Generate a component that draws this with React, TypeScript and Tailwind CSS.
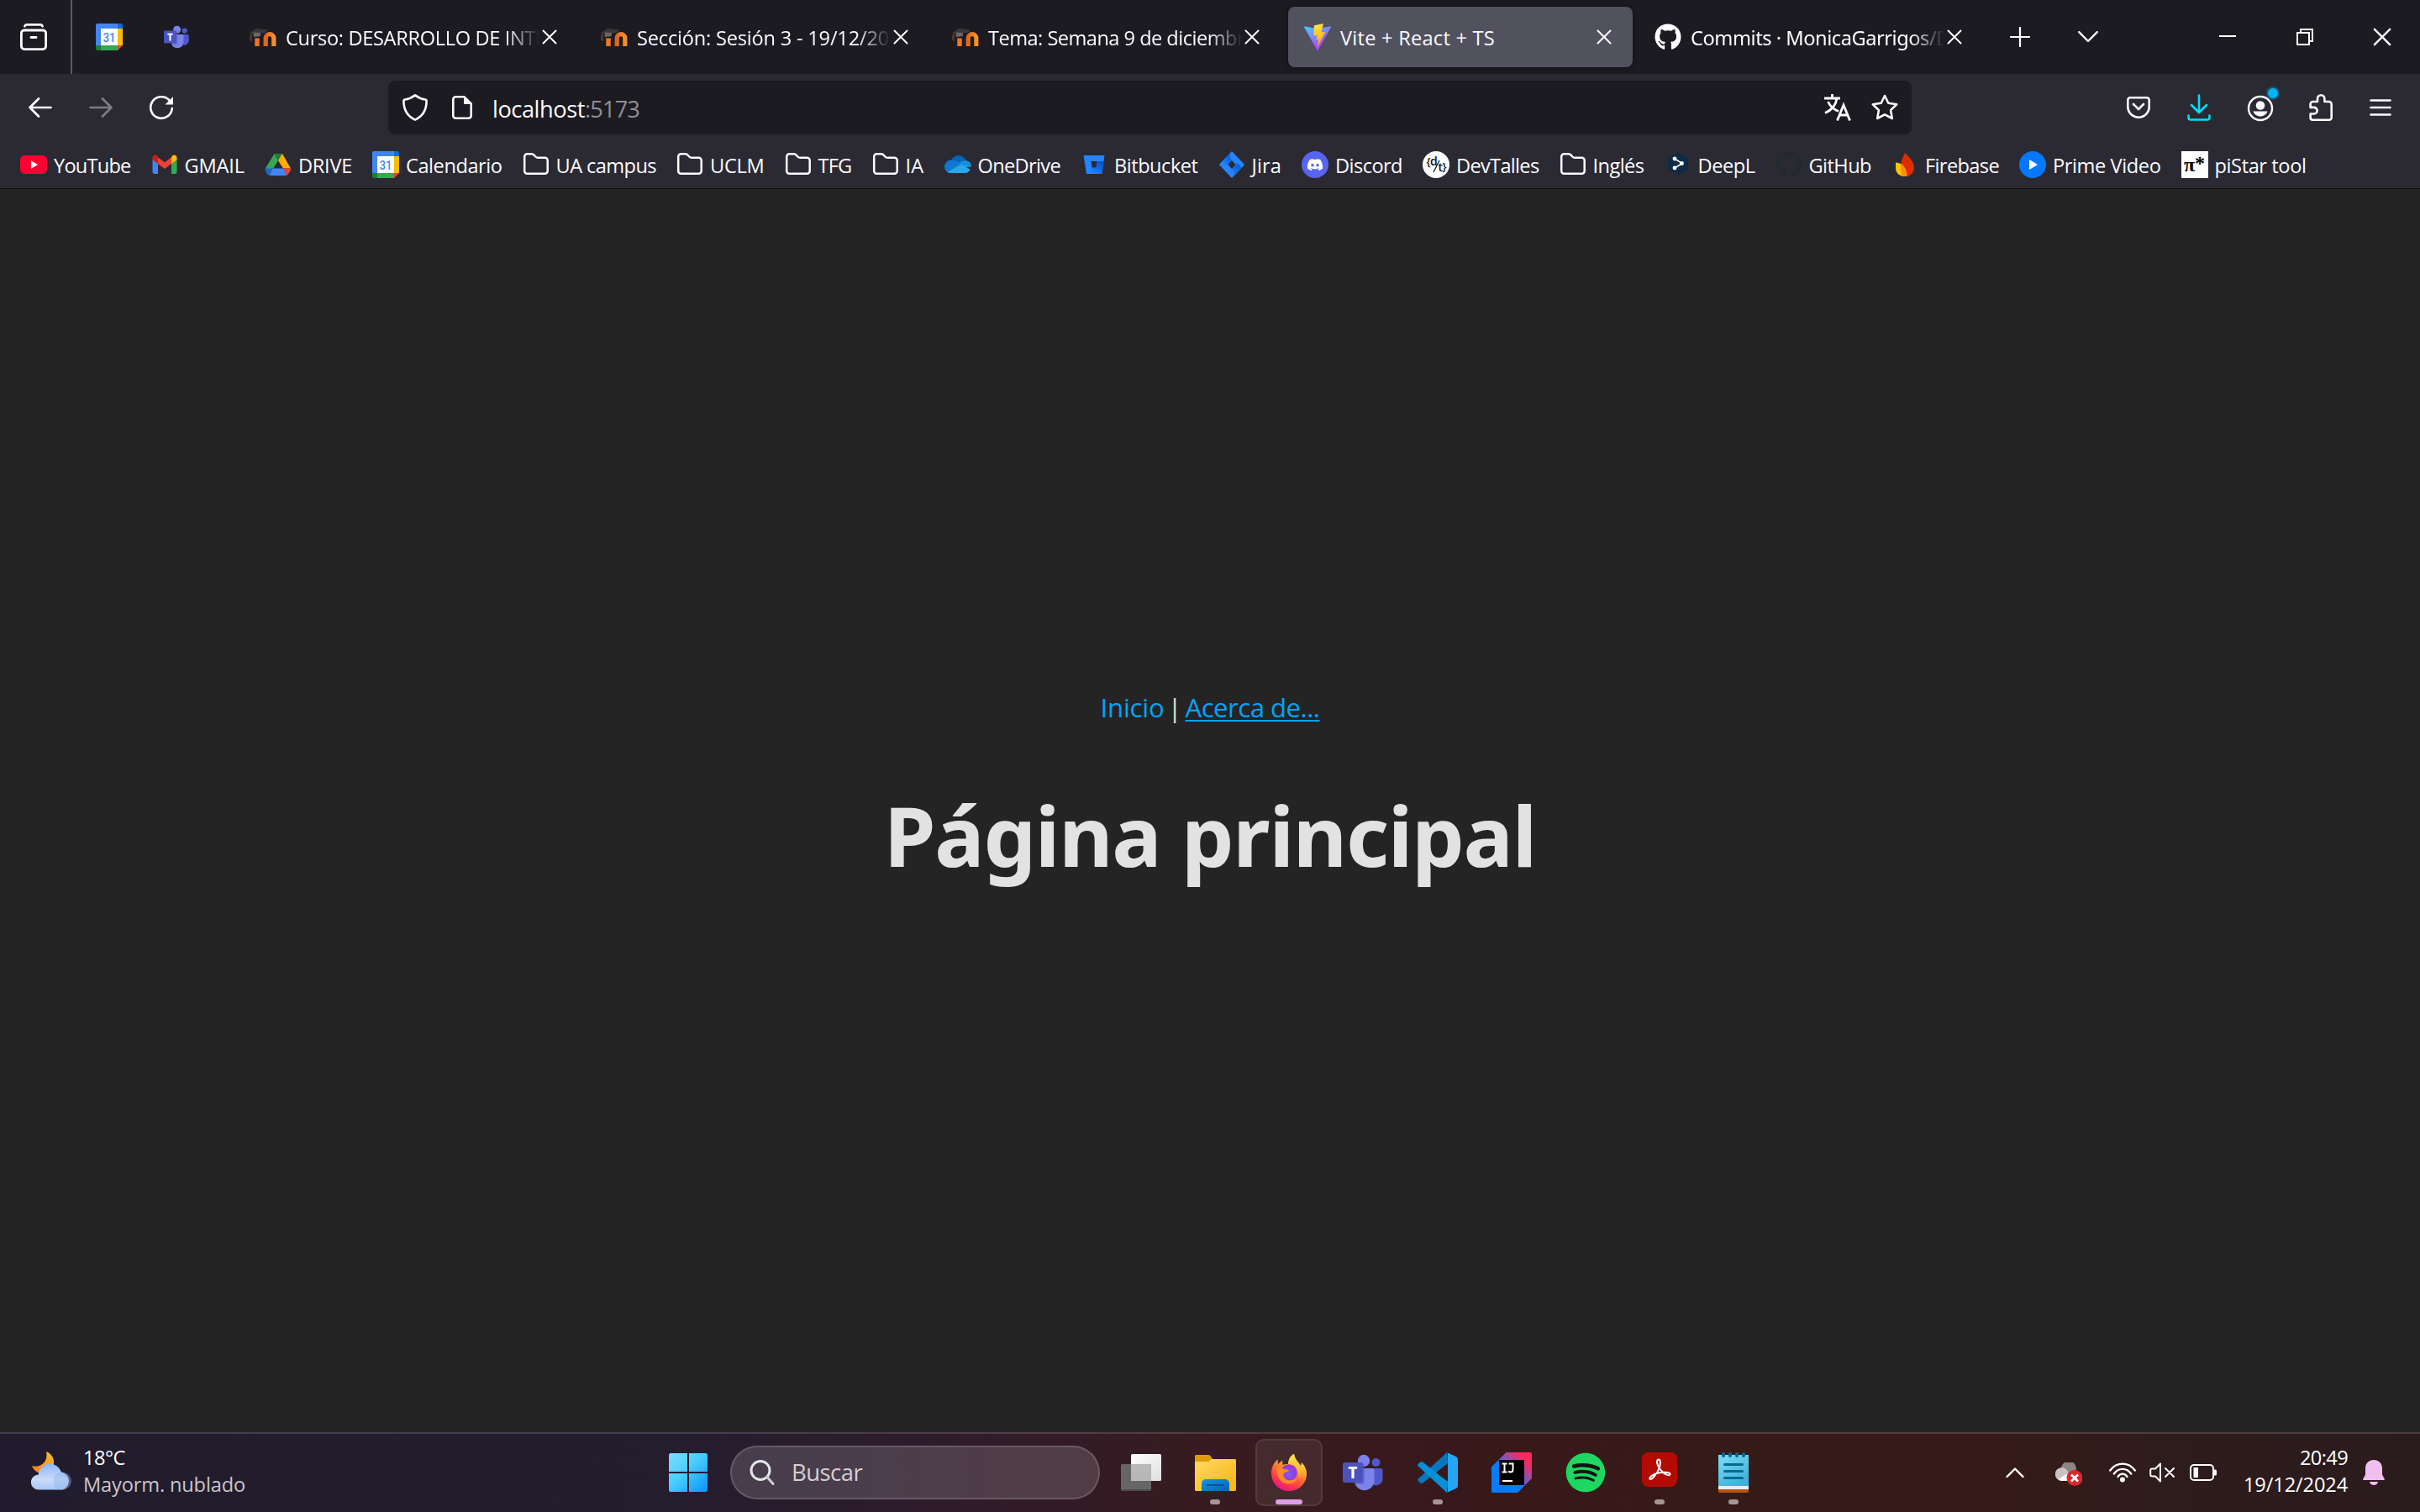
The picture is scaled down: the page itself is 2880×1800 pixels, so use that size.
import { useLayoutEffect, useRef, useState, type ReactNode } from "react";
import { FaGithub, FaDiscord, FaSpotify } from "react-icons/fa";

/* Text set to an exact advance width by adjusting its tracking. */
function Fit({ w, children, className = "" }: { w: number; children: string; className?: string }) {
  const ref = useRef<HTMLSpanElement>(null);
  const [spacing, setSpacing] = useState(0);
  useLayoutEffect(() => {
    if (ref.current) {
      setSpacing((w - ref.current.getBoundingClientRect().width) / children.length);
    }
  }, []);
  return (
    <span ref={ref} className={`inline-block shrink-0 whitespace-pre ${className}`} style={{ letterSpacing: spacing }}>
      {children}
    </span>
  );
}

/* ---------- favicons ---------- */

const Calendar = () => (
  <svg viewBox="0 0 32 32" className="size-8 shrink-0">
    <path d="M0 2a2 2 0 0 1 2-2h24v6H0z" fill="#4285f4" />
    <path d="M0 2h6v24H0z" fill="#4285f4" />
    <path d="M26 0h4a2 2 0 0 1 2 2v4h-6z" fill="#1967d2" />
    <path d="M26 6h6v20h-6z" fill="#fbbc04" />
    <path d="M6 26h20v6H6z" fill="#34a853" />
    <path d="M0 26h6v6H2a2 2 0 0 1-2-2z" fill="#188038" />
    <path d="M26 26h6l-6 6z" fill="#ea4335" />
    <path d="M6 6h20v20H6z" fill="#fff" />
    <text x="16" y="21.6" textAnchor="middle" fontFamily="Roboto, sans-serif" fontSize="15.5" fontWeight="500" fill="#4285f4" textLength="15" lengthAdjust="spacingAndGlyphs">31</text>
  </svg>
);

const Teams = ({ className }: { className: string }) => (
  <svg viewBox="0 0 48 44" className={className}>
    <circle cx="39.5" cy="10" r="5" fill="#5059c9" />
    <path d="M35 17h10a2.5 2.5 0 0 1 2.500 2.500V29a8 8 0 0 1-12.500 7z" fill="#5059c9" />
    <circle cx="25" cy="8" r="7.200" fill="#7b83eb" />
    <path d="M14 17h21.500a2 2 0 0 1 2 2v12.500a11.700 11.700 0 0 1-23.500 0z" fill="#7b83eb" />
    <path d="M16 12h10v21a3 3 0 0 1-3 3h-8z" fill="#4a4fb0" opacity=".45" />
    <rect x="0" y="10" width="24" height="24" rx="2" fill="#4b53bc" />
    <path d="M6.800 15h10.400v2.800h-3.600V29h-3.200V17.800H6.800z" fill="#fff" />
  </svg>
);

const Moodle = () => (
  <svg viewBox="0 0 32 32" className="size-8 shrink-0">
    <defs>
      <linearGradient id="moo" x1="0" x2="1">
        <stop offset="0" stopColor="#e0651f" />
        <stop offset="1" stopColor="#f79029" />
      </linearGradient>
    </defs>
    <path d="M0 17c0-3 1-5 3-5.500V21c-2 0-3-1-3-4z" fill="#5a3426" />
    <path d="M0 11 8 6l14 1.500-4 4-7-.5-5 3-1 4-1-5z" fill="#3a3739" />
    <path d="M9 27V17.500" stroke="#ee7623" strokeWidth="5.500" fill="none" />
    <path d="M19.200 27V17.500a4.800 4.800 0 0 1 9.600 0V27" stroke="url(#moo)" strokeWidth="5.200" fill="none" />
    <path d="M5 10.500 13 11v4l-8 1z" fill="#6a6667" />
  </svg>
);

const Vite = () => (
  <svg viewBox="0 0 32 32" className="size-8 shrink-0">
    <defs>
      <linearGradient id="va" x1="0" y1="0" x2=".6" y2="1">
        <stop offset="0" stopColor="#41d1ff" />
        <stop offset="1" stopColor="#bd34fe" />
      </linearGradient>
      <linearGradient id="vb" x1=".4" y1="0" x2=".6" y2="1">
        <stop offset="0" stopColor="#ffea5a" />
        <stop offset=".3" stopColor="#ffd029" />
        <stop offset="1" stopColor="#ffa800" />
      </linearGradient>
    </defs>
    <path d="M31.800 4.600 16.700 31.500a.8.8 0 0 1-1.400 0L.2 4.600a.8.8 0 0 1 .9-1.200L16 6l14.900-2.600a.8.8 0 0 1 .9 1.200z" fill="url(#va)" />
    <path d="m23.500 0-11.200 2.200a.4.4 0 0 0-.3.400l-.7 11.600c0 .3.200.5.500.4l3.100-.7c.3 0 .5.200.5.500l-.9 4.500c0 .3.200.6.500.5l1.900-.6c.3-.1.600.2.500.5l-1.500 7c-.1.500.5.700.8.300l.2-.3 8-15.900c.1-.3-.1-.6-.5-.5l-3.200.6c-.3.100-.5-.2-.5-.5l2.100-9.500z" fill="url(#vb)" />
  </svg>
);

const Folder = () => (
  <svg viewBox="0 0 32 32" className="size-8 shrink-0" fill="none" stroke="#fbfbfe" strokeWidth="2.500" strokeLinejoin="round">
    <path d="M2.200 23.500V6.500A3.200 3.200 0 0 1 5.400 3.300h5.200a4 4 0 0 1 3 1.300l1.700 1.900a4 4 0 0 0 3 1.300h8.200a3.200 3.200 0 0 1 3.200 3.200v12.500a3.200 3.200 0 0 1-3.200 3.200H5.400a3.200 3.200 0 0 1-3.200-3.200z" />
  </svg>
);

const YouTube = () => (
  <svg viewBox="0 0 32 32" className="size-8 shrink-0">
    <rect y="5" width="32" height="22" rx="5.500" fill="#ff0033" />
    <path d="M13 11.300v9.400l8-4.700z" fill="#fff" />
  </svg>
);

const Gmail = () => (
  <svg viewBox="0 0 32 32" className="size-8 shrink-0">
    <path d="M1.500 10v14.800c0 1.200 1 2.200 2.200 2.200H8V14z" fill="#4285f4" />
    <path d="M24 14v13h4.300c1.200 0 2.200-1 2.200-2.200V10z" fill="#34a853" />
    <path d="M24 7.200V15l6.500-4.800V7.600c0-2.600-3-4.200-5.200-2.500z" fill="#fbbc04" />
    <path d="M8 15V7.200l8 6 8-6V15l-8 6z" fill="#ea4335" />
    <path d="M1.500 7.600v2.600L8 15V7.200L6.700 5.100C4.500 3.500 1.500 5 1.500 7.600z" fill="#c5221f" />
  </svg>
);

const Drive = () => (
  <svg viewBox="0 0 32 32" className="size-8 shrink-0">
    <path d="M11.500 3 16 11 8.500 23.500 4 28.500l-3-5.500c-.5-1-.4-2 0-2.800z" fill="#34a853" />
    <path d="M11.500 3c1-.4 8-.4 9 0L16 11z" fill="#188038" />
    <path d="M20.500 3c.6.3 1 .7 1.300 1.200L31 20.500H22L16 11z" fill="#ffab00" />
    <path d="M1 20.500h9l-4.500 8.200c-.7-.3-1.200-.7-1.500-1.200L1.200 23a3 3 0 0 1-.2-2.500z" fill="#1967d2" />
    <path d="M10 20.500h12l4.500 8.200c-.5.300-20 .3-21 0z" fill="#4285f4" />
    <path d="M22 20.500h9c.3 1 .2 1.800-.3 2.600L28 27.500c-.4.600-.9 1-1.500 1.200z" fill="#ea4335" />
  </svg>
);

const OneDrive = () => (
  <svg viewBox="0 0 32 32" className="size-8 shrink-0">
    <path d="M7 14C8 8.500 12 5 16.500 5c4 0 7.500 2.300 9 6L18 18z" fill="#0364b8" />
    <path d="M25 11c4 .2 7 3.300 7 7.500L17 20l-3-6z" fill="#1490df" />
    <path d="M8 10.500c3-.3 5 .5 7 1.700l5 3L3 24.800A8 8 0 0 1 0 18.500c0-4.300 3.500-7.800 8-8z" fill="#0f78d4" />
    <path d="M3 24.800 20 15.200l10.500 6.500c-.8 2.500-3 4.300-5.700 4.300H8a8 8 0 0 1-5-1.200z" fill="#28a8ea" />
  </svg>
);

const Bitbucket = () => (
  <svg viewBox="0 0 32 32" className="size-8 shrink-0">
    <defs>
      <linearGradient id="bb" x1="1" y1=".2" x2=".3" y2=".9">
        <stop offset="0" stopColor="#0052cc" />
        <stop offset="1" stopColor="#2684ff" />
      </linearGradient>
    </defs>
    <path d="M3.500 5h25l-3.200 22H7z" fill="#2684ff" />
    <path d="M19.500 12h8L25.300 27H7l6-7.500h5.500z" fill="url(#bb)" />
    <path d="M12.500 12h7l-1 7.500h-5z" fill="#2b2a33" />
  </svg>
);

const Jira = () => (
  <svg viewBox="0 0 32 32" className="size-8 shrink-0">
    <defs>
      <linearGradient id="ja" x1="1" y1="0" x2="0" y2="1">
        <stop offset="0" stopColor="#0052cc" />
        <stop offset="1" stopColor="#2684ff" />
      </linearGradient>
    </defs>
    <path d="M16 0 .8 16 16 32l15.200-16z" fill="#2684ff" />
    <path d="M16 0c-3 4-3 8 0 11l-7 7-4-5.500z" fill="url(#ja)" />
    <path d="M16 32c3-4 3-8 0-11l7-7 4 5.500z" fill="url(#ja)" />
    <path d="m16 11-4.500 5 4.500 5 4.500-5z" fill="#2b2a33" />
  </svg>
);

const Discord = () => (
  <span className="grid size-8 shrink-0 place-items-center rounded-full bg-[#5865f2]">
    <FaDiscord className="size-5 text-white" />
  </span>
);

const DevTalles = () => (
  <svg viewBox="0 0 32 32" className="size-8 shrink-0">
    <circle cx="16" cy="16" r="16" fill="#fff" />
    <g fill="#111" fontFamily="Open Sans, sans-serif" fontWeight="600">
      <text x="4.500" y="17" fontSize="13">{"{"}</text>
      <text x="9" y="16.500" fontSize="14">d</text>
      <text x="18.500" y="24" fontSize="14">t</text>
      <text x="23.500" y="23" fontSize="13">{"}"}</text>
    </g>
    <path d="m20 11-7 14" stroke="#111" strokeWidth="1.300" />
  </svg>
);

const DeepL = () => (
  <svg viewBox="0 0 32 32" className="size-8 shrink-0">
    <path d="m16 1 12 7v14l-9 5-2.500 3.500V28L4 21.500V8z" fill="#0f2b46" />
    <path d="m12 9 9 5.500-9 5.500" stroke="#fff" strokeWidth="1.500" fill="none" />
    <circle cx="12" cy="9" r="2.400" fill="#fff" />
    <circle cx="20.500" cy="14.500" r="2.400" fill="#fff" />
    <circle cx="12" cy="20" r="2.400" fill="#fff" />
  </svg>
);

const Firebase = () => (
  <svg viewBox="0 0 32 32" className="size-8 shrink-0">
    <path d="M16 2c6 6 11 11 11 17.500A10 10 0 0 1 18 30c-4-1-7-5-7-10.500C11 13 13 8 16 2z" fill="#dd2c00" />
    <path d="M5 13.500c6 0 10.500 3.500 11.500 16.500C10 30.500 5 26 5 20z" fill="#ffc400" />
    <path d="M11 14.500c4.500 3 7.500 8 7.500 15.300-2 .5-4 .2-5.500-.4-2-3.500-3-9-2-14.900z" fill="#ff9100" />
  </svg>
);

const Prime = () => (
  <svg viewBox="0 0 32 32" className="size-8 shrink-0">
    <circle cx="16" cy="16" r="16" fill="#0578ff" />
    <path d="M12 10v12l10-6z" fill="#fff" />
  </svg>
);

const PiStar = () => (
  <span className="flex size-8 shrink-0 items-center justify-center bg-white text-2xl leading-8 font-bold text-black [font-family:'Liberation_Serif',serif]">
    π<span className="-mt-1">*</span>
  </span>
);

const GithubDark = () => <FaGithub className="size-8 shrink-0 text-[#24292e]" />;

/* ---------- tab strip ---------- */

const Cross = ({ className }: { className: string }) => (
  <svg viewBox="0 0 18 18" className={className} stroke="#fbfbfe" strokeWidth="2" strokeLinecap="round">
    <path d="m1.500 1.500 15 15M16.500 1.500l-15 15" />
  </svg>
);

function Tab({ icon, title, w, active, fade, className = "" }: { icon: ReactNode; title: string; w: number; active?: boolean; fade?: boolean; className?: string }) {
  return (
    <div className="w-[418px] shrink-0 px-1 py-2">
      <div className={`flex h-[72px] items-center rounded-lg ${fade ? "pl-[18px]" : "pl-[19px]"} ${active ? "bg-[#52525e] shadow-[0_0_6px_rgba(0,0,0,0.5)]" : ""}`}>
        {icon}
        <div className={`ml-[11px] w-[302px] pt-px ${fade ? "[mask-image:linear-gradient(to_left,transparent,black_40px)]" : ""}`}>
          <Fit w={w} className={className}>{title}</Fit>
        </div>
        <Cross className="ml-[3px] size-[18px] shrink-0" />
      </div>
    </div>
  );
}

function TabStrip() {
  return (
    <div className="flex h-[88px] items-center bg-[#1c1b22]">
      <div className="flex h-full w-[86px] items-center border-r-2 border-[#5b5a62] pl-6">
        <svg viewBox="0 0 32 32" className="size-8" fill="none" stroke="#fbfbfe" strokeWidth="2.800" strokeLinecap="round">
          <path d="M5.500 3.200A2.500 2.500 0 0 1 8 1.400h16a2.500 2.500 0 0 1 2.500 1.800" />
          <rect x="1.400" y="8" width="29.200" height="22.600" rx="3.500" />
          <path d="M13 16.500h6" />
        </svg>
      </div>
      <div className="ml-7"><Calendar /></div>
      <Teams className="ml-[49px] h-[28px] w-[30px]" />
      <div className="ml-[50px] flex">
        <Tab icon={<Moodle />} title="Curso: DESARROLLO DE INTE" w={310} fade />
        <Tab icon={<Moodle />} title="Sección: Sesión 3 - 19/12/20" w={300} fade />
        <Tab icon={<Moodle />} title="Tema: Semana 9 de diciembr" w={305} fade />
        <Tab icon={<Vite />} title="Vite + React + TS" w={184} active />
        <Tab icon={<FaGithub className="size-8 shrink-0 text-white" />} title="Commits · MonicaGarrigos/D" w={309} fade className="[font-family:'Noto_Sans',sans-serif]" />
      </div>
      <svg viewBox="0 0 24 24" className="ml-[27px] size-6" stroke="#fbfbfe" strokeWidth="2.200" strokeLinecap="round">
        <path d="M12 1v22M1 12h22" />
      </svg>
      <svg viewBox="0 0 24 14" className="ml-[57px] h-[14px] w-6" fill="none" stroke="#fbfbfe" strokeWidth="2.400" strokeLinecap="round" strokeLinejoin="round">
        <path d="M1.200 1.200 12 12 22.800 1.200" />
      </svg>
      <div className="ml-[144px] h-0.5 w-5 -translate-y-px bg-white" />
      <svg viewBox="0 0 20 20" className="ml-[72px] size-5" fill="none" stroke="#fff" strokeWidth="2">
        <path d="M1 5h14v14H1zM5 5V1h14v14h-4" />
      </svg>
      <Cross className="ml-[71px] size-[22px]" />
    </div>
  );
}

/* ---------- navigation bar ---------- */

function NavBar() {
  return (
    <div className="flex h-20 items-center">
      <svg viewBox="0 0 28 24" className="ml-[34px] h-6 w-7" fill="none" stroke="#fbfbfe" strokeWidth="2.700" strokeLinecap="round" strokeLinejoin="round">
        <path d="M26.500 12H1.500M12 1.500 1.500 12 12 22.500" />
      </svg>
      <svg viewBox="0 0 28 24" className="ml-11 h-6 w-7" fill="none" stroke="#7d7c83" strokeWidth="2.700" strokeLinecap="round" strokeLinejoin="round">
        <path d="M1.500 12h25M16 1.500 26.500 12 16 22.500" />
      </svg>
      <svg viewBox="0 0 29 29" className="ml-11 size-[29px]" fill="none" stroke="#fbfbfe" strokeWidth="2.700" strokeLinecap="round">
        <path d="M23.500 5.400A12.800 12.800 0 1 0 26.800 15" />
        <path d="M28 1v9.500H18.500z" fill="#fbfbfe" stroke="none" />
      </svg>
      <div className="ml-[255px] flex h-16 w-[1813px] items-center rounded-lg bg-[#1c1b22]">
        <svg viewBox="0 0 30 32" className="ml-[17px] h-8 w-[30px]" fill="none" stroke="#fbfbfe" strokeWidth="2.600" strokeLinejoin="round">
          <path d="M15 1.400C18.500 4 23 6 27 6.500c.9.100 1.600.8 1.600 1.800C28.600 19 24 26.500 15 30.600 6 26.500 1.400 19 1.400 8.300c0-1 .7-1.700 1.600-1.800C7 6 11.500 4 15 1.400z" />
        </svg>
        <svg viewBox="0 0 24 28" className="ml-[29px] h-7 w-6" fill="none" stroke="#fbfbfe" strokeWidth="2.600" strokeLinejoin="round">
          <path d="M14.500 1.300H4.300a3 3 0 0 0-3 3v19.400a3 3 0 0 0 3 3h15.400a3 3 0 0 0 3-3V9.500z" />
          <path d="M14 1v9h9z" fill="#fbfbfe" stroke="none" />
        </svg>
        <div className="ml-6 pt-[3px] text-[27.200px] leading-10">
          <Fit w={110}>localhost</Fit>
          <Fit w={65} className="text-[#8f8e94]">:5173</Fit>
        </div>
        <svg viewBox="0 0 32 32" className="ml-auto size-8" fill="none" stroke="#fbfbfe" strokeWidth="2.800">
          <path d="M0 5h19M9.500 0v5M4.500 9C7 15 12 18.500 17 20.500M15 5C14 13 9 19 1 22.500M15.500 31.500 23 13l7.500 18.500M18 25h10" />
        </svg>
        <svg viewBox="0 0 32 32" className="mr-4 ml-6 size-8" fill="none" stroke="#fbfbfe" strokeWidth="2.600" strokeLinejoin="round">
          <path d="m16 2 4.300 8.800 9.900 1.400-7.100 6.900 1.700 9.900L16 24.400 7.200 29l1.700-9.900-7.100-6.900 9.900-1.400z" />
        </svg>
      </div>
      <svg viewBox="0 0 28 26" className="ml-64 h-[26px] w-7" fill="none" stroke="#fbfbfe" strokeWidth="2.600" strokeLinecap="round" strokeLinejoin="round">
        <path d="M4 1.300h20a2.700 2.700 0 0 1 2.700 2.700v8A12.700 12.700 0 0 1 1.300 12V4A2.700 2.700 0 0 1 4 1.300zM8 9l6 6 6-6" />
      </svg>
      <svg viewBox="0 0 28 32" className="ml-11 h-8 w-7" fill="none" stroke="#00ddff" strokeWidth="2.600" strokeLinecap="round" strokeLinejoin="round">
        <path d="M14 1.500v20M5 13l9 9 9-9M1.500 25.500V28a2.500 2.500 0 0 0 2.500 2.500h20a2.500 2.500 0 0 0 2.500-2.500v-2.500" />
      </svg>
      <div className="relative ml-[43px]">
        <svg viewBox="0 0 32 32" className="mt-0.5 size-8">
          <circle cx="16" cy="16" r="14" fill="none" stroke="#fbfbfe" strokeWidth="2.400" />
          <circle cx="16" cy="12.500" r="5.300" fill="#fbfbfe" />
          <path d="M7.500 19.500h17c-1 3.500-4.500 6-8.500 6s-7.500-2.500-8.500-6z" fill="#fbfbfe" />
        </svg>
        <span className="absolute -top-1.5 left-[25px] size-3 rounded-full bg-[#00b3f4] ring-2 ring-[#00b3f4]/30" />
      </div>
      <svg viewBox="0 0 28 32" className="ml-[42px] h-8 w-7" fill="none" stroke="#fbfbfe" strokeWidth="2.600" strokeLinejoin="round">
        <path d="M10 9V5.500a4.200 4.200 0 0 1 8.400 0V9h5.300a3 3 0 0 1 3 3v16a2.700 2.700 0 0 1-2.700 2.700H4.300a2.700 2.700 0 0 1-2.700-2.700v-4.500h4.200a3.800 3.800 0 0 0 0-7.600H1.600V12a3 3 0 0 1 3-3z" />
      </svg>
      <svg viewBox="0 0 26 20" className="ml-11 h-5 w-[26px]" stroke="#fbfbfe" strokeWidth="2.600" strokeLinecap="round">
        <path d="M1.500 1.500h23M1.500 10h23M1.500 18.500h23" />
      </svg>
    </div>
  );
}

const bookmarks: { icon: ReactNode; label: string; w: number }[] = [
  { icon: <YouTube />, label: "YouTube", w: 91.5 },
  { icon: <Gmail />, label: "GMAIL", w: 71.5 },
  { icon: <Drive />, label: "DRIVE", w: 64 },
  { icon: <Calendar />, label: "Calendario", w: 114.5 },
  { icon: <Folder />, label: "UA campus", w: 119.5 },
  { icon: <Folder />, label: "UCLM", w: 64.5 },
  { icon: <Folder />, label: "TFG", w: 40 },
  { icon: <Folder />, label: "IA", w: 22 },
  { icon: <OneDrive />, label: "OneDrive", w: 98.5 },
  { icon: <Bitbucket />, label: "Bitbucket", w: 99.5 },
  { icon: <Jira />, label: "Jira", w: 35.5 },
  { icon: <Discord />, label: "Discord", w: 80 },
  { icon: <DevTalles />, label: "DevTalles", w: 98.5 },
  { icon: <Folder />, label: "Inglés", w: 61 },
  { icon: <DeepL />, label: "DeepL", w: 68 },
  { icon: <GithubDark />, label: "GitHub", w: 74.5 },
  { icon: <Firebase />, label: "Firebase", w: 88 },
  { icon: <Prime />, label: "Prime Video", w: 128.5 },
  { icon: <PiStar />, label: "piStar tool", w: 109 },
];

function Bookmarks() {
  return (
    <div className="flex h-14 items-center gap-6 pl-6">
      {bookmarks.map((b) => (
        <div key={b.label} className="flex items-center gap-2">
          {b.icon}
          <Fit w={b.w} className="pt-0.5">{b.label}</Fit>
        </div>
      ))}
    </div>
  );
}

/* ---------- taskbar ---------- */

const Weather = () => (
  <svg viewBox="0 0 48 46" className="h-[46px] w-12">
    <defs>
      <linearGradient id="wm" x1="1" y1="0" x2="0" y2="1">
        <stop offset="0" stopColor="#f5c02f" />
        <stop offset="1" stopColor="#f07f1b" />
      </linearGradient>
      <linearGradient id="wc" x1="0" y1="0" x2="0" y2="1">
        <stop offset="0" stopColor="#8fb5f5" />
        <stop offset=".6" stopColor="#c9dcf8" />
        <stop offset="1" stopColor="#a9c6f6" />
      </linearGradient>
    </defs>
    <path d="M18 0c9 3.500 12 14 6 21-6 7-19 7-23-4 9 3 20-4 17-17z" fill="url(#wm)" />
    <path d="M9 45.500a9 9 0 0 1-.3-18A14 14 0 0 1 36 24.600 10.800 10.800 0 0 1 37.500 45.500z" fill="url(#wc)" />
    <path d="M27 31a11 11 0 0 1 21 4 10.500 10.500 0 0 1-10.500 10.500H28z" fill="#8fb2ee" opacity=".45" />
  </svg>
);

const Explorer = () => (
  <svg viewBox="0 0 49 43" className="h-[43px] w-[49px]">
    <defs>
      <linearGradient id="ex" x1="0" y1="0" x2="1" y2="1">
        <stop offset="0" stopColor="#ffd967" />
        <stop offset="1" stopColor="#f7b50c" />
      </linearGradient>
      <linearGradient id="ey" x1="0" y1="0" x2="1" y2="1">
        <stop offset="0" stopColor="#1594e0" />
        <stop offset="1" stopColor="#0663ba" />
      </linearGradient>
    </defs>
    <path d="M0 1.500C0 .6.600 0 1.500 0h14c1.500 0 2.500.5 3.500 1.700L21 5v8H0z" fill="#e09c04" />
    <path d="M0 9.500C0 8.500.7 8 1.500 8h13c1.500 0 2.500-.5 3.500-1.500l1-1c.6-.5 1-.5 2-.5h26.500c.9 0 1.500.6 1.500 1.500v35c0 .9-.6 1.500-1.500 1.500h-46C.6 43 0 42.400 0 41.500z" fill="url(#ex)" />
    <path d="M8 43v-9a5 5 0 0 1 5-5h23a5 5 0 0 1 5 5v9z" fill="url(#ey)" />
    <path d="M15 36h19" stroke="#0a4f9a" strokeWidth="2" strokeLinecap="round" />
  </svg>
);

const Firefox = () => (
  <svg viewBox="0 0 42 44" className="h-11 w-[42px]">
    <defs>
      <linearGradient id="fa" x1=".85" y1="0" x2=".35" y2="1">
        <stop offset="0" stopColor="#fff44f" />
        <stop offset=".3" stopColor="#ffbd32" />
        <stop offset=".55" stopColor="#ff7139" />
        <stop offset=".8" stopColor="#ff3647" />
        <stop offset="1" stopColor="#e31587" />
      </linearGradient>
      <radialGradient id="fb" cx=".5" cy=".6" r=".6">
        <stop offset="0" stopColor="#7a5cf0" />
        <stop offset="1" stopColor="#a22fd0" />
      </radialGradient>
      <linearGradient id="fc" x1="0" y1="0" x2="0" y2="1">
        <stop offset="0" stopColor="#ffe847" />
        <stop offset="1" stopColor="#ff9a2b" />
      </linearGradient>
    </defs>
    <path d="M0 23C0 17 2 11 7.500 6.500L8 12l5-4.500.5 5.500c2-1 4-1.300 6.500-1C20.500 6 23 2 27 0c.3 4.500 3 7.500 5.500 10.500L35 14l1-4c4 4 6 8.500 6 13.500C42 35 33 44 21 44S0 35 0 23z" fill="url(#fa)" />
    <path d="M20 12c.5-6 3-10 7-12 .3 4.500 3 7.500 5.500 10.500 4.500 6 5 13 1 18.500-1-8-5-14-13.500-17z" fill="url(#fc)" />
    <circle cx="21" cy="22" r="9.800" fill="url(#fb)" />
    <path d="M6 16c3-1 6-.5 8.500 1.500 2.500 1.500 5 .5 6.500 1.700-1.500 2.300-4.500 2.300-6.500 3.800-1 5 3 8.500 8 8.500 3 0 5-1.500 8-2-2.500 5-7 6.500-11.500 6C11 34.500 6 27 6 16z" fill="#ff8a2a" />
  </svg>
);

const VSCode = () => (
  <svg viewBox="0 0 48 48" className="size-12">
    <path d="M35 0 .8 31.500a2 2 0 0 0 0 2.700l2.700 2.400a2 2 0 0 0 2.400.1L36 13z" fill="#0a76bb" />
    <path d="M35 48 .8 16.500a2 2 0 0 1 0-2.700l2.700-2.400a2 2 0 0 1 2.400-.1L36 35z" fill="#0790d8" />
    <path d="M35.300 47.800c-1 .3-1.300.2-2-.6 1.500 1 2.700.3 2.700-1.200V2C36 .5 34.800-.2 33.300.8c.7-.8 1-.9 2-.6l10.500 4.700A4 4 0 0 1 48 8.500v31a4 4 0 0 1-2.200 3.600z" fill="#26a6f2" />
  </svg>
);

const IntelliJ = () => (
  <svg viewBox="0 0 48 48" className="size-12">
    <defs>
      <linearGradient id="ij" x1=".9" y1=".05" x2=".35" y2=".6">
        <stop offset="0" stopColor="#fe2857" />
        <stop offset=".2" stopColor="#f42c60" />
        <stop offset=".75" stopColor="#5a62d8" />
        <stop offset="1" stopColor="#087cfa" />
      </linearGradient>
    </defs>
    <path d="M17.500 0H46a2 2 0 0 1 2 2v29L31 48H2a2 2 0 0 1-2-2V17.500z" fill="url(#ij)" />
    <path d="M0 17.500 9 9v30h30L31 48H2a2 2 0 0 1-2-2z" fill="#087cfa" />
    <path d="M9 9h30v30H9z" />
    <path d="M12.500 13.500h6M15.500 13.500v10M12.500 23.500h6M20.500 13.500h5v7c0 2-1 3-2.700 3-1.300 0-2-.4-2.600-1.200M13 34h12" stroke="#fff" strokeWidth="2" fill="none" />
  </svg>
);

const Spotify = () => (
  <span className="grid size-12 place-items-center">
    <span className="col-start-1 row-start-1 size-11 rounded-full bg-[#121212]" />
    <FaSpotify className="col-start-1 row-start-1 size-12 text-[#1ed760]" />
  </span>
);

const Acrobat = () => (
  <svg viewBox="0 0 42 42" className="mb-1.5 size-[42px]">
    <rect width="42" height="41" rx="7.500" fill="#b30b00" />
    <path d="M20 8.500c2.500.2 2.300 5.500.5 10.500S13 31.500 10.500 32c-2 .3-1.700-2.500 2-4.600 3.700-2.200 10-3.600 15-3.600s6.500 1.500 5.800 2.700c-1.300 2-6-.5-8.800-3.300S18.200 15 18 11.500c0-2 .8-3 2-3z" fill="none" stroke="#fff" strokeWidth="2" />
  </svg>
);

const Notepad = () => (
  <svg viewBox="0 0 36 48" className="h-12 w-9">
    <defs>
      <linearGradient id="np" x1="0" y1="0" x2=".6" y2="1">
        <stop offset="0" stopColor="#7fdcf5" />
        <stop offset="1" stopColor="#3eb2da" />
      </linearGradient>
    </defs>
    <path d="M0 42h36v4.500c0 .8-.6 1.500-1.500 1.500h-33C.6 48 0 47.300 0 46.500z" fill="#b4530a" />
    <path d="M0 38h36v6H0z" fill="#e8edf2" />
    <path d="M0 3h36v37H0z" fill="url(#np)" />
    <path d="M6 2v2M14 2v2M22 2v2M30 2v2" stroke="#046a92" strokeWidth="4" strokeLinecap="round" />
    <path d="M7.500 14.500h21M7.500 22.500h21M7.500 30.500h21" stroke="#046a92" strokeWidth="3" strokeLinecap="round" />
  </svg>
);

const TaskView = () => (
  <svg viewBox="0 0 48 44" className="h-11 w-12">
    <defs>
      <linearGradient id="tv" x1="0" y1="0" x2="1" y2="1">
        <stop offset="0" stopColor="#fff" />
        <stop offset="1" stopColor="#dedede" />
      </linearGradient>
    </defs>
    <rect x="12" width="36" height="32" rx="1.500" fill="url(#tv)" />
    <rect y="12" width="36" height="32" rx="1.500" fill="#666" />
    <path d="M12 12h22.500a1.500 1.500 0 0 1 1.500 1.500V32H12z" fill="#b9b8b8" />
    <path d="M0 42h36v.5a1.500 1.500 0 0 1-1.500 1.500h-33A1.500 1.500 0 0 1 0 42.500z" fill="#4a4a4a" />
  </svg>
);

const Start = () => (
  <svg viewBox="0 0 46 46" className="size-[46px]">
    <defs>
      <linearGradient id="st" gradientUnits="userSpaceOnUse" x1="0" y1="0" x2="46" y2="46">
        <stop offset="0" stopColor="#7fdcff" />
        <stop offset=".45" stopColor="#48cdff" />
        <stop offset="1" stopColor="#0a93ff" />
      </linearGradient>
    </defs>
    <path d="M1.500 0H22v22H0V1.500zM24 0h20.500L46 1.500V22H24zM0 24h22v22H1.500L0 44.500zM24 24h22v20.500L44.500 46H24z" fill="url(#st)" />
  </svg>
);

function TaskbarApp({ children, running, focused }: { children: ReactNode; running?: boolean; focused?: boolean }) {
  return (
    <div className="relative flex h-[92px] w-[88.100px] shrink-0 items-center justify-center">
      {focused && <span className="absolute inset-x-1 top-1.5 h-20 rounded-[10px] border-2 border-white/8 bg-white/7" />}
      <span className="relative">{children}</span>
      {running && <span className="absolute top-[78px] h-1.5 w-3 rounded-full bg-[#a49696]" />}
      {focused && <span className="absolute top-[78px] h-1.5 w-8 rounded-full bg-[#dc9fe6]" />}
    </div>
  );
}

function Taskbar() {
  return (
    <div className="flex h-[95px] items-start border-t-2 border-white/15 bg-[linear-gradient(90deg,#211c2d_0%,#241d2e_28%,#2e1c2c_38%,#371b20_50%,#38191b_60%,#361a17_72%,#361a17_82%,#2f1c1b_88%,#2a1b1d_100%)] bg-origin-border">
      <div className="flex h-[88px] w-[775px] items-center pl-[37px]">
        <Weather />
        <div className="ml-[14px] flex flex-col items-start leading-8 text-white">
          <Fit w={50}>18°C</Fit>
          <Fit w={193} className="text-[#c8c6cb]">Mayorm. nublado</Fit>
        </div>
      </div>
      <TaskbarApp><Start /></TaskbarApp>
      <div className="mt-[14px] ml-1.5 flex h-16 w-[440px] shrink-0 items-center rounded-full border-2 border-white/15 bg-white/15 pl-[21px]">
        <svg viewBox="0 0 30 30" className="size-[30px]" fill="none" stroke="#e3e6e8" strokeWidth="3" strokeLinecap="round">
          <circle cx="13" cy="12.500" r="11" />
          <path d="m21 20.500 7 8" stroke="#c9d0d4" />
        </svg>
        <Fit w={84} className="ml-5 text-[27.500px] leading-10 text-[#d5ced3]">Buscar</Fit>
      </div>
      <div className="ml-[5px] flex">
        <TaskbarApp><TaskView /></TaskbarApp>
        <TaskbarApp running><Explorer /></TaskbarApp>
        <TaskbarApp focused><Firefox /></TaskbarApp>
        <TaskbarApp><Teams className="h-[44px] w-12" /></TaskbarApp>
        <TaskbarApp running><VSCode /></TaskbarApp>
        <TaskbarApp><IntelliJ /></TaskbarApp>
        <TaskbarApp><Spotify /></TaskbarApp>
        <TaskbarApp running><Acrobat /></TaskbarApp>
        <TaskbarApp running><Notepad /></TaskbarApp>
      </div>
      <div className="mr-[42px] ml-auto flex h-[92px] items-center">
        <svg viewBox="0 0 22 12" className="h-3 w-[22px]" fill="none" stroke="#fff" strokeWidth="2.400" strokeLinecap="round" strokeLinejoin="round">
          <path d="m1.500 11 9.500-9.500 9.500 9.500" />
        </svg>
        <svg viewBox="0 0 32 28" className="mt-1 ml-[37px] h-7 w-8">
          <path d="M7 7a9 9 0 0 1 18 1l-8 8z" fill="#8d8584" />
          <path d="M7.500 6C11 6 14 8 15 11v11H8A8 8 0 0 1 7.500 6z" fill="#c9c4c3" />
          <path d="m4 20 9-6 4 2v6H8c-1.500 0-3-.7-4-2z" fill="#fff" />
          <circle cx="23" cy="18.500" r="9.500" fill="#dc262c" />
          <path d="m19 14.500 8 8m0-8-8 8" stroke="#fff" strokeWidth="2.600" />
        </svg>
        <svg viewBox="0 0 32 24" className="ml-8 h-6 w-8" fill="none" stroke="#fff" strokeWidth="2.300" strokeLinecap="round">
          <path d="M1.200 9.500C9 -1 23 -1 30.800 9.500M5.800 13.500C11 6 21 6 26.200 13.500M10.500 17c2.500-4.500 8.500-4.500 11 0" />
          <circle cx="16" cy="20.500" r="3" fill="#fff" stroke="none" />
        </svg>
        <svg viewBox="0 0 30 24" className="ml-4 h-6 w-[30px]" fill="none" stroke="#fff" strokeWidth="2" strokeLinecap="round" strokeLinejoin="round">
          <path d="M13 1.500v21l-6-6H3A1.800 1.800 0 0 1 1.200 15V9A1.800 1.800 0 0 1 3 7.500h4zM19 7l10 10M29 7 19 17" />
        </svg>
        <svg viewBox="0 0 32 20" className="ml-[18px] h-5 w-8" fill="none" stroke="#fff" strokeWidth="2">
          <rect x="1" y="1" width="27" height="18" rx="4" />
          <path d="M4.500 4h5.500v12H4.500zM29 6.500h1.500A1.500 1.500 0 0 1 32 8v4a1.500 1.500 0 0 1-1.500 1.500H29z" fill="#fff" stroke="none" />
        </svg>
        <div className="mb-1 flex w-[156px] flex-col items-end leading-8 text-white">
          <Fit w={57}>20:49</Fit>
          <Fit w={124}>19/12/2024</Fit>
        </div>
        <svg viewBox="0 0 26 30" className="ml-[18px] h-[30px] w-[26px]" fill="#f0bff0">
          <path d="M13 0c6 0 10 4.300 10 10v7.500l2.700 5c.6 1-.1 1.500-1 1.500H1.300c-.9 0-1.600-.5-1-1.500L3 17.500V10C3 4.300 7 0 13 0zM8 26h10c-.5 2.500-2.500 4-5 4s-4.500-1.500-5-4z" />
        </svg>
      </div>
    </div>
  );
}

export default function App() {
  return (
    <div className="flex h-[1800px] w-[2880px] flex-col overflow-hidden bg-[#242424] text-[23.600px] leading-8 text-[#fbfbfe] [font-family:'Open_Sans','Noto_Sans',sans-serif]">
      <TabStrip />
      <div className="border-b border-[#0c0c0d] bg-[#2b2a33]">
        <NavBar />
        <Bookmarks />
      </div>
      <main className="flex flex-1 flex-col items-center pt-[593px]">
        <nav className="flex text-[31.200px] leading-[48px] text-[#00a3ff]">
          <Fit w={76}>Inicio</Fit>
          <span className="w-[25px] text-center text-white/87">|</span>
          <Fit w={160} className="underline decoration-2 underline-offset-[3px]">Acerca de...</Fit>
        </nav>
        <h1 className="mt-[72px] text-[99px] leading-[112px] font-bold text-[#e2e2e2] [font-family:'Noto_Sans',sans-serif]">
          <Fit w={776}>Página principal</Fit>
        </h1>
      </main>
      <Taskbar />
    </div>
  );
}
